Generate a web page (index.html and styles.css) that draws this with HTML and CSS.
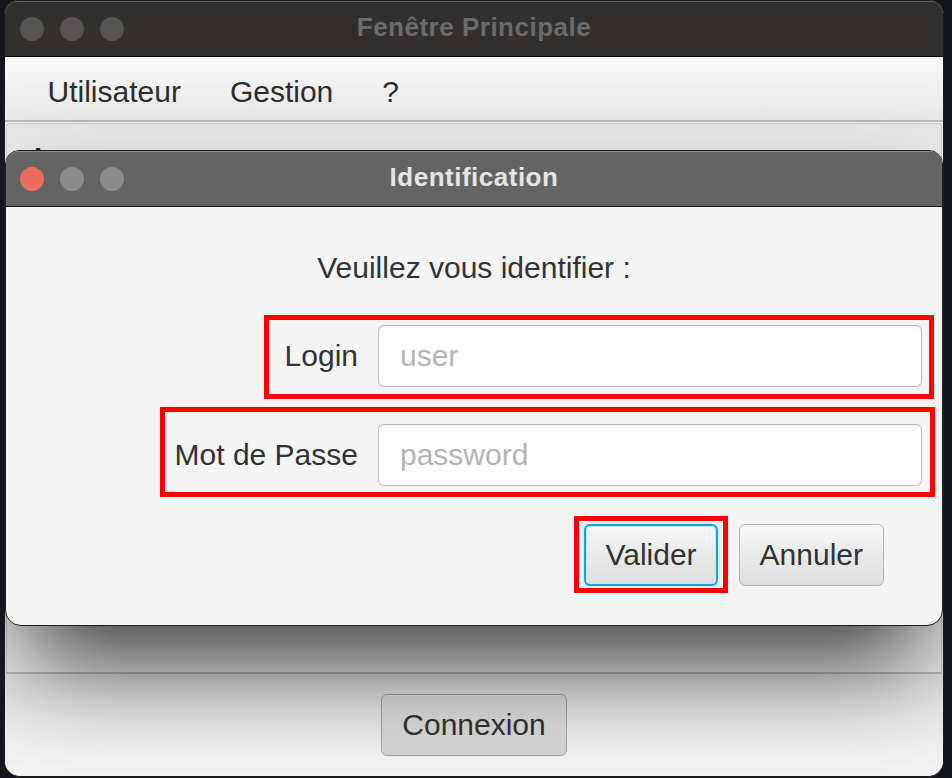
FILE: index.html
```html
<!DOCTYPE html>
<html lang="fr">
<head>
<meta charset="utf-8">
<title>Fenêtre Principale</title>
<link rel="stylesheet" href="styles.css">
</head>
<body>
<div class="desktop">
  <div class="window">
    <div class="titlebar">
      <div class="lights">
        <span class="light"></span><span class="light"></span><span class="light"></span>
      </div>
      <div class="title">Fenêtre Principale</div>
      <div></div>
    </div>
    <nav class="menubar">
      <span class="menu-item">Utilisateur</span>
      <span class="menu-item">Gestion</span>
      <span class="menu-item">?</span>
    </nav>
    <div class="content">
      <div class="panel"><span class="panel-label">Aucune</span></div>
    </div>
    <div class="footer">
      <button class="btn btn-main">Connexion</button>
    </div>

    <div class="dialog">
      <div class="titlebar dlg-titlebar">
        <div class="lights dlg-lights">
          <span class="light close"></span><span class="light"></span><span class="light"></span>
        </div>
        <div class="title dlg-title">Identification</div>
        <div></div>
      </div>
      <div class="dlg-body">
        <p class="prompt">Veuillez vous identifier :</p>
        <div class="form">
          <label class="label" for="login">Login</label>
          <input class="field" id="login" type="text" placeholder="user">
          <label class="label" for="pwd">Mot de Passe</label>
          <input class="field" id="pwd" type="password" placeholder="password">
        </div>
        <div class="actions">
          <button class="btn focused">Valider</button>
          <button class="btn">Annuler</button>
        </div>
      </div>
      <div class="mark mark-login"></div>
      <div class="mark mark-pwd"></div>
      <div class="mark mark-ok"></div>
    </div>
  </div>
</div>
</body>
</html>
```
FILE: styles.css
```css
html, body {
  margin: 0;
  padding: 0;
}
body {
  width: 952px;
  height: 778px;
  overflow: hidden;
  background: #15151c;
  font-family: "Liberation Sans", Arial, sans-serif;
}
.desktop {
  padding: 0 8px 0 4px;
}
.window {
  position: relative;
  width: 940px;
  height: 777px;
  box-sizing: border-box;
  border: 1px solid #1b1b1b;
  border-radius: 14px 14px 16px 16px;
  overflow: hidden;
  display: flex;
  flex-direction: column;
  background: #f2f2f2;
}
.titlebar {
  flex: none;
  height: 55px;
  display: grid;
  grid-template-columns: 1fr auto 1fr;
  align-items: center;
  background: #32302f;
  border-bottom: 1px solid #0a0a0a;
  box-shadow: inset 0 1px 0 #5f5f5f;
}
.lights {
  display: flex;
  gap: 16px;
  padding-left: 15px;
}
.light {
  width: 24px;
  height: 24px;
  border-radius: 50%;
  background: #555453;
}
.title {
  font-weight: 700;
  font-size: 26px;
  letter-spacing: 0.5px;
  line-height: 26px;
  color: #6b6b6b;
  margin-bottom: 4px;
  white-space: nowrap;
}
.menubar {
  flex: none;
  height: 65px;
  box-sizing: border-box;
  padding: 4px 0 0 18px;
  display: flex;
  background: linear-gradient(#f9f9f9, #e8e8e8);
  border-bottom: 2px solid #b9b9b9;
}
.menu-item {
  font-size: 30px;
  line-height: 61px;
  padding: 0 24.5px;
  color: #2e2e2e;
}
.content {
  flex: 1;
  padding: 1px 1px 0 1px;
  display: flex;
}
.panel {
  flex: 1;
  box-sizing: border-box;
  border: 1px solid #cacaca;
  border-bottom: 2px solid #bababa;
  border-radius: 3px 3px 0 0;
  background: linear-gradient(#e7e7e7, #eeeeee 25%, #eeeeee);
  padding: 17px 21px;
}
.panel-label {
  font-size: 30px;
  line-height: 34px;
  color: #222;
}
.footer {
  flex: none;
  height: 102px;
  display: flex;
  justify-content: center;
  align-items: center;
  background: linear-gradient(#e6e6e6, #f5f5f5);
}
.btn {
  height: 62px;
  box-sizing: border-box;
  padding: 0 20px;
  font-family: "Liberation Sans", Arial, sans-serif;
  font-size: 30px;
  color: #333;
  border: 1px solid #b3b3b3;
  border-radius: 6px;
  background: linear-gradient(#f7f7f7, #dddddd);
  box-shadow: inset 0 1px 0 #ffffff;
}
.btn-main {
  border-color: #a5a5a5;
  background: linear-gradient(#e2e2e2, #d6d6d6);
  box-shadow: inset 0 1px 0 #ececec;
}
.btn.focused {
  border: 2px solid #1ba1dc;
  padding: 0 19px;
  box-shadow: inset 0 0 0 1px #c6e5f3, 0 0 0 2px rgba(27, 161, 220, 0.10);
}

/* dialog window */
.dialog {
  position: absolute;
  left: 0;
  right: 0;
  top: 149px;
  height: 476px;
  box-sizing: border-box;
  border: 1px solid #1e1e1e;
  border-radius: 14px 14px 16px 16px;
  overflow: hidden;
  background: #f4f4f4;
  box-shadow: 0 54px 94px -20px rgba(0, 0, 0, 0.78);
}
.dlg-titlebar {
  background: #646464;
  border-bottom: 1px solid #111;
  box-shadow: inset 0 1px 0 #8a8a8a;
}
.dlg-lights {
  padding-left: 14px;
}
.dlg-lights .light {
  background: #8b8b8b;
}
.dlg-lights .light.close {
  background: #ed6a5e;
}
.dlg-title {
  color: #e4e4e4;
}
.dlg-body {
  padding-top: 44px;
}
.prompt {
  margin: 0;
  font-size: 30px;
  line-height: 34px;
  text-align: center;
  color: #333;
}
.form {
  margin-top: 40px;
  display: grid;
  grid-template-columns: 1fr 544px;
  column-gap: 20px;
  row-gap: 37px;
  align-items: center;
  padding-right: 20px;
}
.label {
  justify-self: end;
  font-size: 30px;
  line-height: 34px;
  color: #333;
}
.field {
  width: 544px;
  height: 62px;
  box-sizing: border-box;
  margin: 0;
  padding: 0 21px;
  border: 1px solid #c3c3c3;
  border-top-color: #b5b5b5;
  border-radius: 6px;
  background: #fff;
  font-family: "Liberation Sans", Arial, sans-serif;
  font-size: 30px;
  color: #333;
  outline: none;
  box-shadow: inset 0 2px 2px rgba(0, 0, 0, 0.04);
}
.field::placeholder {
  color: #b4b4b4;
}
.actions {
  margin-top: 38px;
  display: flex;
  justify-content: flex-end;
  gap: 21px;
  padding-right: 58px;
}

/* red annotation boxes drawn over the screenshot */
.mark {
  position: absolute;
  box-sizing: border-box;
  border: 5px solid #ff0000;
}
.mark-login {
  left: 258px;
  top: 164px;
  width: 670px;
  height: 84px;
}
.mark-pwd {
  left: 154px;
  top: 256px;
  width: 775px;
  height: 90px;
}
.mark-ok {
  left: 568px;
  top: 365px;
  width: 154px;
  height: 77px;
}
```
